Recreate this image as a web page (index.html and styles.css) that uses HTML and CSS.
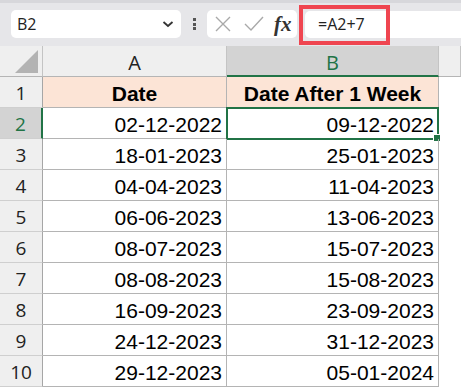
FILE: index.html
```html
<!DOCTYPE html>
<html lang="en">
<head>
<meta charset="UTF-8">
<title>Date After 1 Week</title>
<link rel="stylesheet" href="styles.css">
</head>
<body>
<div class="ribbon">
    <div class="namebox">
        <span>B2</span>
        <svg width="12" height="8" viewBox="0 0 12 8"><path d="M1.5 2 L6 6 L10.5 2" fill="none" stroke="#333" stroke-width="1.8"/></svg>
    </div>
    <div class="grip"><i></i><i></i><i></i></div>
    <div class="fx-buttons">
        <svg width="16" height="16" viewBox="0 0 16 16"><path d="M1 1 L15 15 M15 1 L1 15" stroke="#a9a9a9" stroke-width="1.4" fill="none"/></svg>
        <svg width="20" height="16" viewBox="0 0 20 16"><path d="M1 8 L7 14 L19 1" stroke="#a9a9a9" stroke-width="1.4" fill="none"/></svg>
        <span class="fx">fx</span>
    </div>
    <div class="formula">=A2+7</div>
    <div class="highlight"></div>
</div>

<div class="sheet">
    <div class="corner"><svg width="24" height="23" viewBox="0 0 24 23"><polygon points="23,0 23,23 0,23" fill="#b3b3b3"/></svg></div>
    <div class="col-head">A</div>
    <div class="col-head active">B</div>
    <div class="col-head"></div>

    <div class="row-head">1</div>
    <div class="cell title">Date</div>
    <div class="cell title">Date After 1 Week</div>
    <div class="blank"></div>

    <div class="row-head active">2</div>
    <div class="cell">02-12-2022</div>
    <div class="cell selected">09-12-2022</div>
    <div class="blank"></div>

    <div class="row-head">3</div>
    <div class="cell">18-01-2023</div>
    <div class="cell">25-01-2023</div>
    <div class="blank"></div>

    <div class="row-head">4</div>
    <div class="cell">04-04-2023</div>
    <div class="cell">11-04-2023</div>
    <div class="blank"></div>

    <div class="row-head">5</div>
    <div class="cell">06-06-2023</div>
    <div class="cell">13-06-2023</div>
    <div class="blank"></div>

    <div class="row-head">6</div>
    <div class="cell">08-07-2023</div>
    <div class="cell">15-07-2023</div>
    <div class="blank"></div>

    <div class="row-head">7</div>
    <div class="cell">08-08-2023</div>
    <div class="cell">15-08-2023</div>
    <div class="blank"></div>

    <div class="row-head">8</div>
    <div class="cell">16-09-2023</div>
    <div class="cell">23-09-2023</div>
    <div class="blank"></div>

    <div class="row-head">9</div>
    <div class="cell">24-12-2023</div>
    <div class="cell">31-12-2023</div>
    <div class="blank"></div>

    <div class="row-head">10</div>
    <div class="cell">29-12-2023</div>
    <div class="cell">05-01-2024</div>
    <div class="blank"></div>
</div>
</body>
</html>
```

FILE: styles.css
```css
* { margin: 0; padding: 0; box-sizing: border-box; }
body {
    width: 461px; height: 388px; overflow: hidden;
    background: #fff;
    font-family: "Liberation Sans", Arial, sans-serif;
}

/* formula bar */
.ribbon {
    position: relative;
    display: flex; align-items: flex-start;
    height: 46px;
    padding: 7px 0 0 11px;
    background: #e6e6e9;
    border-top: 3px solid #d7d7db;
}
.namebox {
    display: flex; align-items: center; justify-content: space-between;
    width: 170px; height: 28px;
    padding: 0 7px 0 6px;
    background: #fff; border-radius: 5px;
    font-family: "Open Sans", sans-serif; font-size: 16px; color: #222;
}
.grip {
    display: flex; flex-direction: column; justify-content: space-between;
    width: 3px; height: 12px;
    margin: 8px 0 0 12px;
}
.grip i { display: block; width: 3px; height: 3px; background: #555; }
.fx-buttons {
    display: flex; align-items: center;
    width: 90px; height: 28px;
    margin-left: 11px;
    padding-left: 8px;
    background: #fff; border-radius: 5px;
}
.fx-buttons svg:nth-child(2) { margin-left: 13px; }
.fx {
    margin-left: 10px;
    font-family: "Liberation Serif", serif; font-style: italic; font-weight: bold; font-size: 21px;
    color: #333; line-height: 20px;
}
.formula {
    flex: 1;
    height: 27px;
    margin: 1px -10px 0 8px;
    padding-left: 13px;
    background: #fff; border-radius: 5px;
    font-family: "Open Sans", sans-serif; font-size: 16px; line-height: 26px; color: #222;
}
.highlight {
    position: absolute; left: 299px; top: 2px;
    width: 91px; height: 40px;
    border: 4px solid #ef4550;
}

/* grid */
.sheet {
    display: grid;
    grid-template-columns: 43px 184px 212px 22px;
    grid-template-rows: repeat(11, 31px);
}
.corner {
    display: flex; align-items: flex-end; justify-content: flex-end;
    padding: 0 3px 3px 0;
    background: #efefef;
    border-right: 1px solid #c4c4c4; border-bottom: 1px solid #b5b5b5;
}
.col-head {
    display: flex; align-items: center; justify-content: center;
    padding-top: 3px;
    background: #efefef;
    border-right: 1px solid #c4c4c4; border-bottom: 1px solid #b5b5b5;
    font-family: "Open Sans", sans-serif; font-size: 20px; color: #222;
}
.col-head.active {
    background: #d3d3d3; color: #217346;
    border-bottom: 2px solid #217346;
}
.row-head {
    display: flex; align-items: center; justify-content: center;
    padding-top: 2px;
    background: #efefef;
    border-right: 1px solid #a6a6a6; border-bottom: 1px solid #cfcfcf;
    font-family: "Open Sans", sans-serif; font-size: 19px; color: #222;
}
.row-head.active {
    background: #d3d3d3; color: #217346;
    border-right: 2px solid #217346;
}
.cell {
    position: relative;
    display: flex; align-items: flex-end; justify-content: flex-end;
    padding: 0 4px 2px 0;
    border-right: 1px solid #b4b4b4; border-bottom: 1px solid #b4b4b4;
    font-size: 21px; line-height: 22px; color: #000;
}
.cell.title {
    justify-content: center;
    padding-right: 0;
    background: #fce4d6;
    font-weight: bold;
}
.cell.selected::before {
    content: "";
    position: absolute; top: -1px; left: -1px; right: -1px; bottom: -2px;
    border: 2px solid #217346;
}
.cell.selected::after {
    content: "";
    position: absolute; right: -3px; bottom: -4px;
    width: 6px; height: 6px;
    background: #217346; border: 1px solid #fff;
}
.blank { background: #fff; }
```
